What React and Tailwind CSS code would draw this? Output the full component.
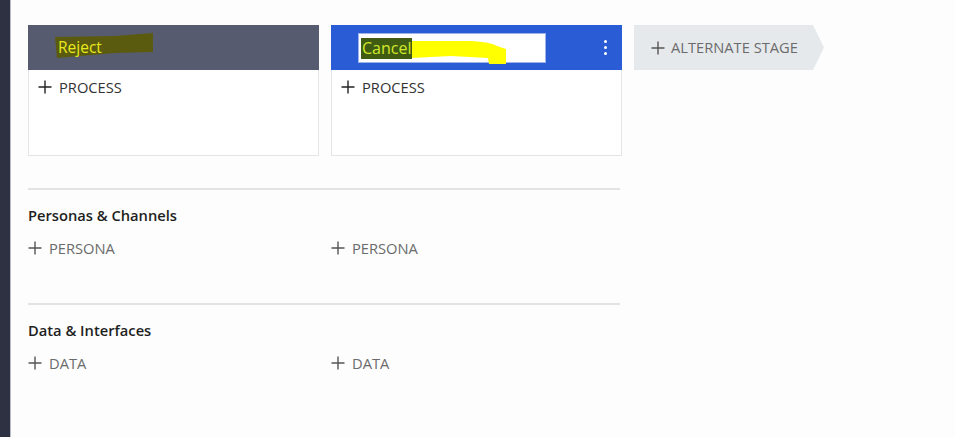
import React from 'react';

function PlusIcon({ className = '' }) {
	return (
		<svg viewBox="0 0 14 14" className={className} fill="none" stroke="currentColor" strokeWidth="1.4">
			<path d="M7 0.5v13M0.5 7h13" />
		</svg>
	);
}

function AddLink({ label, dark = false }) {
	return (
		<div className={`flex items-center gap-[7px] text-[14.7px] ${dark ? 'text-[#333333]' : 'text-[#6b6b6b]'}`}>
			<PlusIcon className={`w-[14px] h-[14px] ${dark ? 'text-[#222222]' : 'text-[#555555]'}`} />
			<span>{label}</span>
		</div>
	);
}

function StageCard({ header }) {
	return (
		<div className="w-[291px] shrink-0">
			{header}
			<div className="h-[86px] border border-[#e3e5e6] border-t-0 bg-white pl-[9px] pt-[6px]">
				<AddLink label="PROCESS" dark />
			</div>
		</div>
	);
}

function Section({ title, label }) {
	return (
		<div className="w-[592px] border-t-2 border-[#e2e4e4] pt-[15px] h-[115px]">
			<div className="text-[14.7px] font-semibold text-[#1f1f1f] leading-[20px]">{title}</div>
			<div className="grid grid-cols-[303px_1fr] mt-[12px]">
				<AddLink label={label} />
				<AddLink label={label} />
			</div>
		</div>
	);
}

export default function App() {
	const rejectHeader = (
		<div className="relative h-[45px] bg-[#575b6f] flex items-center pl-[30px]">
			<svg className="absolute left-[27px] top-[8px]" width="100" height="26" viewBox="0 0 100 26">
				<path d="M0 4 L60 3 L98 0 L98 19 L60 20 L2 25 Z" fill="#5b5b10" />
			</svg>
			<span className="relative text-[15.5px] text-[#e8ea1e] leading-none">Reject</span>
		</div>
	);

	const cancelHeader = (
		<div className="relative h-[45px] bg-[#2a5cd6] flex items-center pl-[27px] pr-[15px]">
			<div className="relative w-[188px] h-[30px] bg-white border border-[#9fb4e6] flex items-center pl-[2px]">
				<svg className="absolute left-[52px] top-[5px]" width="96" height="26" viewBox="0 0 96 26">
					<path d="M0 2 L60 2 Q80 3 86 7 L95 10 L95 25 L78 25 L77 19 L40 17 L0 19 Z" fill="#ffff00" />
				</svg>
				<span className="relative bg-[#3f5c12] text-[#d2e82a] text-[16px] leading-[21px] px-[1px] mt-[1px]">Cancel</span>
			</div>
			<div className="ml-auto flex flex-col gap-[3px] items-center">
				<span className="w-[3px] h-[3px] rounded-full bg-white" />
				<span className="w-[3px] h-[3px] rounded-full bg-white" />
				<span className="w-[3px] h-[3px] rounded-full bg-white" />
			</div>
		</div>
	);

	return (
		<div className="flex h-[437px] w-[955px] overflow-hidden bg-[#fcfdfc] font-['Open_Sans',sans-serif]">
			<div className="w-[11px] bg-[#2d3142] border-r border-[#b9bcc4] shrink-0" />
			<div className="pl-[17px] pt-[25px]">
				<div className="flex gap-[12px]">
					<StageCard header={rejectHeader} />
					<StageCard header={cancelHeader} />
					<div className="w-[190px] h-[45px] bg-[#e6e9eb] flex items-center pl-[17px] text-[14.7px] text-[#6b6b6b] gap-[6px] [clip-path:polygon(0_0,calc(100%-11px)_0,100%_50%,calc(100%-11px)_100%,0_100%)]">
						<PlusIcon className="w-[14px] h-[14px] text-[#555555]" />
						<span>ALTERNATE STAGE</span>
					</div>
				</div>
				<div className="mt-[32px]">
					<Section title="Personas & Channels" label="PERSONA" />
					<Section title="Data & Interfaces" label="DATA" />
				</div>
			</div>
		</div>
	);
}
